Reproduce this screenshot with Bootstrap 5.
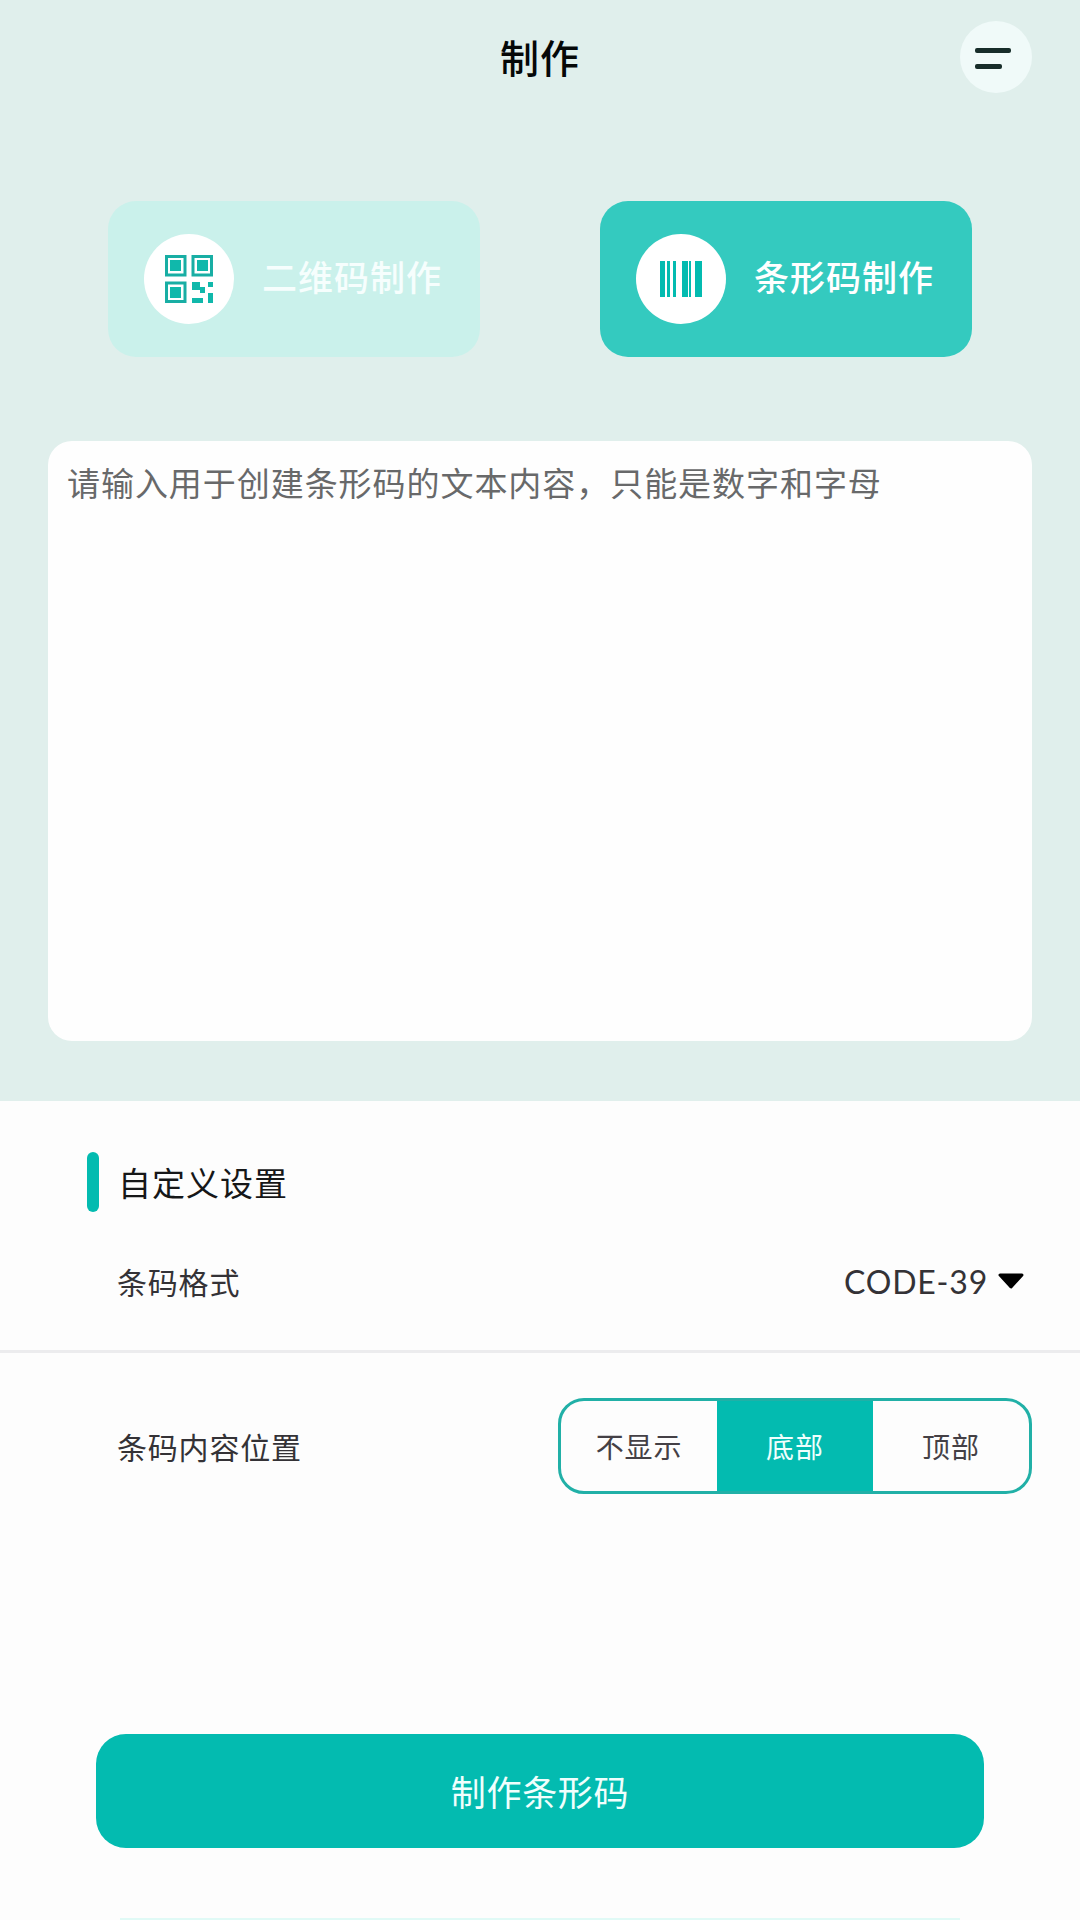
<!DOCTYPE html>
<html lang="zh-CN">
<head>
<meta charset="utf-8">
<meta name="viewport" content="width=device-width, initial-scale=1">
<title>制作</title>
<link href="https://cdn.jsdelivr.net/npm/bootstrap@5.3.0/dist/css/bootstrap.min.css" rel="stylesheet">
<style>
:root{--teal:#03bbb0}
body{font-family:"Noto Sans CJK SC",sans-serif;background:#fdfdfd;line-height:1.2}
.screen{width:1080px;height:1920px;overflow:hidden}
.maker{height:1101px;background:#e0efec;padding:0 48px}
.topbar{height:114px;margin-bottom:87px;display:grid;grid-template-columns:72px 1fr 72px;align-items:center}
.topbar h1{font-size:39px;font-weight:500;letter-spacing:1px;color:#050808;line-height:60px;padding-bottom:3px}
.menu-btn{width:72px;height:72px;background:#f0faf9}
.tabs-row{padding:0 60px;margin-bottom:84px}
.tab-btn{width:372px;height:156px;border-radius:28px;padding:0 0 0 36px;gap:28px;font-size:35px;letter-spacing:1px;font-weight:500;color:#fff;border:0;background:#34cabf}
.tab-btn:hover{background:#34cabf;color:#fff}
.tab-btn.idle,.tab-btn.idle:hover{background:#caf1eb;color:#f6fefd}
.tab-label{padding-bottom:5px}
.disc{width:90px;height:90px;background:#fff;flex:none}
.entry,.entry:focus{height:600px;border:0;border-radius:24px;padding:16px 19px;font-size:33px;letter-spacing:.95px;line-height:50px;resize:none;background:#fefefe;box-shadow:none}
.entry::placeholder{color:#68696a;opacity:1}
.heading{padding:51px 0 0 87px;gap:19px}
.heading i{width:12px;height:60px;border-radius:6px;background:var(--teal)}
.heading h2{font-size:33px;letter-spacing:1px;font-weight:400;color:#161718;line-height:50px}
.option{font-size:30px;letter-spacing:.8px;color:#343236;padding:0 48px 0 117px}
.format-row{height:141px;border-bottom:3px solid #ececee}
.pos-row{height:186px}
.code{font-family:Lato,sans-serif;font-size:32px;line-height:40px;letter-spacing:.8px;padding-top:2px}
.seg{width:474px;height:96px;border:3px solid #21b0a7;border-radius:26px;overflow:hidden}
.seg .btn{border:0;border-radius:0;font-size:28px;letter-spacing:.9px;color:#444045;padding:0;flex:1 1 0}
.seg .btn.active{background:var(--teal);color:#effffd}
.make-btn,.make-btn:hover{width:888px;height:114px;border-radius:30px;background:var(--teal);color:#f0fffd;font-size:35px;letter-spacing:.7px;border:0;margin-top:195px}
.foot-edge{margin:70px 120px 0;height:2px;background:#e0faf6}
</style>
</head>
<body>
<main class="screen d-flex flex-column">
<section class="maker">
  <header class="topbar">
    <span></span>
    <h1 class="m-0 text-center">制作</h1>
    <button class="menu-btn btn rounded-circle border-0 p-0" aria-label="菜单">
      <svg class="d-block" width="72" height="72" viewBox="0 0 72 72" fill="#172d2a"><rect x="15" y="27" width="36" height="5" rx="2"/><rect x="15" y="43" width="27" height="5" rx="2"/></svg>
    </button>
  </header>
  <nav class="tabs-row d-flex justify-content-between">
    <button class="tab-btn idle btn d-flex align-items-center">
      <span class="disc rounded-circle d-flex align-items-center justify-content-center">
        <svg width="48" height="48" viewBox="0 0 48 48" fill="#10b8ab"><g fill="none" stroke="#18aea4" stroke-width="3"><path d="M1.5 1.5h18.500v18.500h-18.500zM28 1.500h18.500v18.500h-18.500zM1.500 28h18.500v18.500h-18.500z"/></g><path d="M5 5h11v11H5zM32 5h11v11H32zM5 32h11v11H5zM27 27h8v5h5v6h-5v-3h-8zM43 27h5v5h-5zM27 43h11v5H27zM43 38h5v10h-5z"/></svg>
      </span>
      <span class="tab-label">二维码制作</span>
    </button>
    <button class="tab-btn btn d-flex align-items-center">
      <span class="disc rounded-circle d-flex align-items-center justify-content-center">
        <svg width="42" height="36" viewBox="0 0 42 36" fill="#03bbb0"><path d="M0 0h5v36H0zM7 0h3v36H7zM13 0h3v36h-3zM22 0h6v36h-6zM29 0h2v36h-2zM35 0h7v36h-7z"/></svg>
      </span>
      <span class="tab-label">条形码制作</span>
    </button>
  </nav>
  <textarea class="entry form-control" placeholder="请输入用于创建条形码的文本内容，只能是数字和字母"></textarea>
</section>
<section>
  <div class="heading d-flex align-items-center"><i></i><h2 class="m-0">自定义设置</h2></div>
  <div class="option format-row d-flex justify-content-between align-items-center">
    <span>条码格式</span>
    <span class="d-flex align-items-center"><span class="code">CODE-39</span>
      <svg class="ms-2" width="32" height="20" viewBox="0 0 32 20"><path d="M4 4H26L15 16z" fill="#000" stroke="#000" stroke-width="3" stroke-linejoin="round"/></svg><span class="pe-1"></span></span>
  </div>
  <div class="option pos-row d-flex justify-content-between align-items-center">
    <span>条码内容位置</span>
    <div class="seg d-flex" role="group"><button class="btn">不显示</button><button class="btn active">底部</button><button class="btn">顶部</button></div>
  </div>
</section>
<button class="make-btn btn align-self-center">制作条形码</button>
<div class="foot-edge"></div>
</main>
<script src="https://cdn.jsdelivr.net/npm/bootstrap@5.3.0/dist/js/bootstrap.bundle.min.js"></script>
</body>
</html>
